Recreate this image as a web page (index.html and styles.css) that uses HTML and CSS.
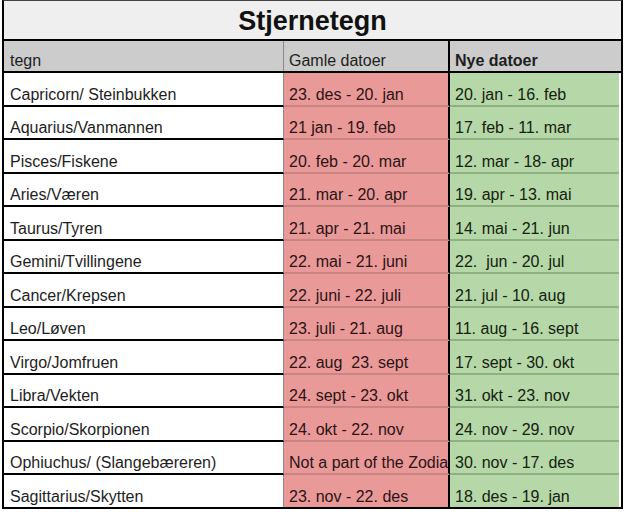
FILE: index.html
```html
<!DOCTYPE html>
<html lang="no">
<head>
<meta charset="utf-8">
<title>Stjernetegn</title>
<link rel="stylesheet" href="styles.css">
</head>
<body>
<div class="sheet">
  <div class="title">Stjernetegn</div>
  <div class="head">
    <div class="c1">tegn</div>
    <div class="c2">Gamle datoer</div>
    <div class="c3 bold">Nye datoer</div>
  </div>
  <div class="rows">
    <div class="row"><div class="c1">Capricorn/ Steinbukken</div><div class="c2">23. des - 20. jan</div><div class="c3">20. jan - 16. feb</div></div>
    <div class="row"><div class="c1">Aquarius/Vanmannen</div><div class="c2">21 jan - 19. feb</div><div class="c3">17. feb - 11. mar</div></div>
    <div class="row"><div class="c1">Pisces/Fiskene</div><div class="c2">20. feb - 20. mar</div><div class="c3">12. mar - 18- apr</div></div>
    <div class="row"><div class="c1">Aries/Væren</div><div class="c2">21. mar - 20. apr</div><div class="c3">19. apr - 13. mai</div></div>
    <div class="row"><div class="c1">Taurus/Tyren</div><div class="c2">21. apr - 21. mai</div><div class="c3">14. mai - 21. jun</div></div>
    <div class="row"><div class="c1">Gemini/Tvillingene</div><div class="c2">22. mai - 21. juni</div><div class="c3">22.&nbsp; jun - 20. jul</div></div>
    <div class="row"><div class="c1">Cancer/Krepsen</div><div class="c2">22. juni - 22. juli</div><div class="c3">21. jul - 10. aug</div></div>
    <div class="row"><div class="c1">Leo/Løven</div><div class="c2">23. juli - 21. aug</div><div class="c3">11. aug - 16. sept</div></div>
    <div class="row"><div class="c1">Virgo/Jomfruen</div><div class="c2">22. aug&nbsp; 23. sept</div><div class="c3">17. sept - 30. okt</div></div>
    <div class="row"><div class="c1">Libra/Vekten</div><div class="c2">24. sept - 23. okt</div><div class="c3">31. okt - 23. nov</div></div>
    <div class="row"><div class="c1">Scorpio/Skorpionen</div><div class="c2">24. okt - 22. nov</div><div class="c3">24. nov - 29. nov</div></div>
    <div class="row"><div class="c1">Ophiuchus/ (Slangebæreren)</div><div class="c2">Not a part of the Zodiac</div><div class="c3">30. nov - 17. des</div></div>
    <div class="row last"><div class="c1">Sagittarius/Skytten</div><div class="c2">23. nov - 22. des</div><div class="c3">18. des - 19. jan</div></div>
  </div>
</div>
</body>
</html>
```
FILE: styles.css
```css
html, body {
  margin: 0;
  padding: 0;
  background: #ffffff;
}

body {
  font-family: "Liberation Sans", Arial, sans-serif;
  color: #1e1e1e;
  width: 624px;
  height: 514px;
  overflow: hidden;
}

.sheet {
  margin-left: 2px;
  width: 621px;
  box-sizing: border-box;
  border-top: 1px solid #444;
  border-left: 2px solid #000;
  border-right: 2px solid #000;
  border-bottom: 2px solid #000;
}

.title {
  height: 40px;
  box-sizing: border-box;
  border-bottom: 2px solid #000;
  background: #efefef;
  display: flex;
  align-items: center;
  justify-content: center;
  padding-top: 3px;
  font-size: 27px;
  font-weight: bold;
  color: #111;
}

.head,
.row {
  display: grid;
  grid-template-columns: 280px 166px 169px;
  font-size: 16px;
  line-height: 18px;
}

.head {
  height: 32px;
  box-sizing: border-box;
  background: #cccccc;
  border-bottom: 2px solid #000;
}

.head > div,
.row > div {
  display: flex;
  align-items: flex-end;
  padding: 0 0 1px 5px;
  white-space: nowrap;
  overflow: hidden;
  box-sizing: border-box;
}

.head > div {
  padding-bottom: 1px;
}

.head .c1 {
  padding-left: 6px;
}

.c1 {
  border-right: 1px solid #8a8a8a;
}

.c2 {
  border-right: 2px solid #000;
}

.bold {
  font-weight: bold;
}

.row {
  height: 33.5px;
}

.row .c1 {
  background: #ffffff;
  border-bottom: 2px solid #000;
  padding-left: 6px;
}

.row .c2 {
  background: #ea9999;
  border-bottom: 2px solid #c98484;
  color: #2a1414;
}

.row .c3 {
  background: #b6d7a8;
  border-bottom: 2px solid #8fb182;
  color: #14220f;
}

.row.last {
  height: 31.5px;
}

.row.last > div {
  border-bottom: none;
}
```
